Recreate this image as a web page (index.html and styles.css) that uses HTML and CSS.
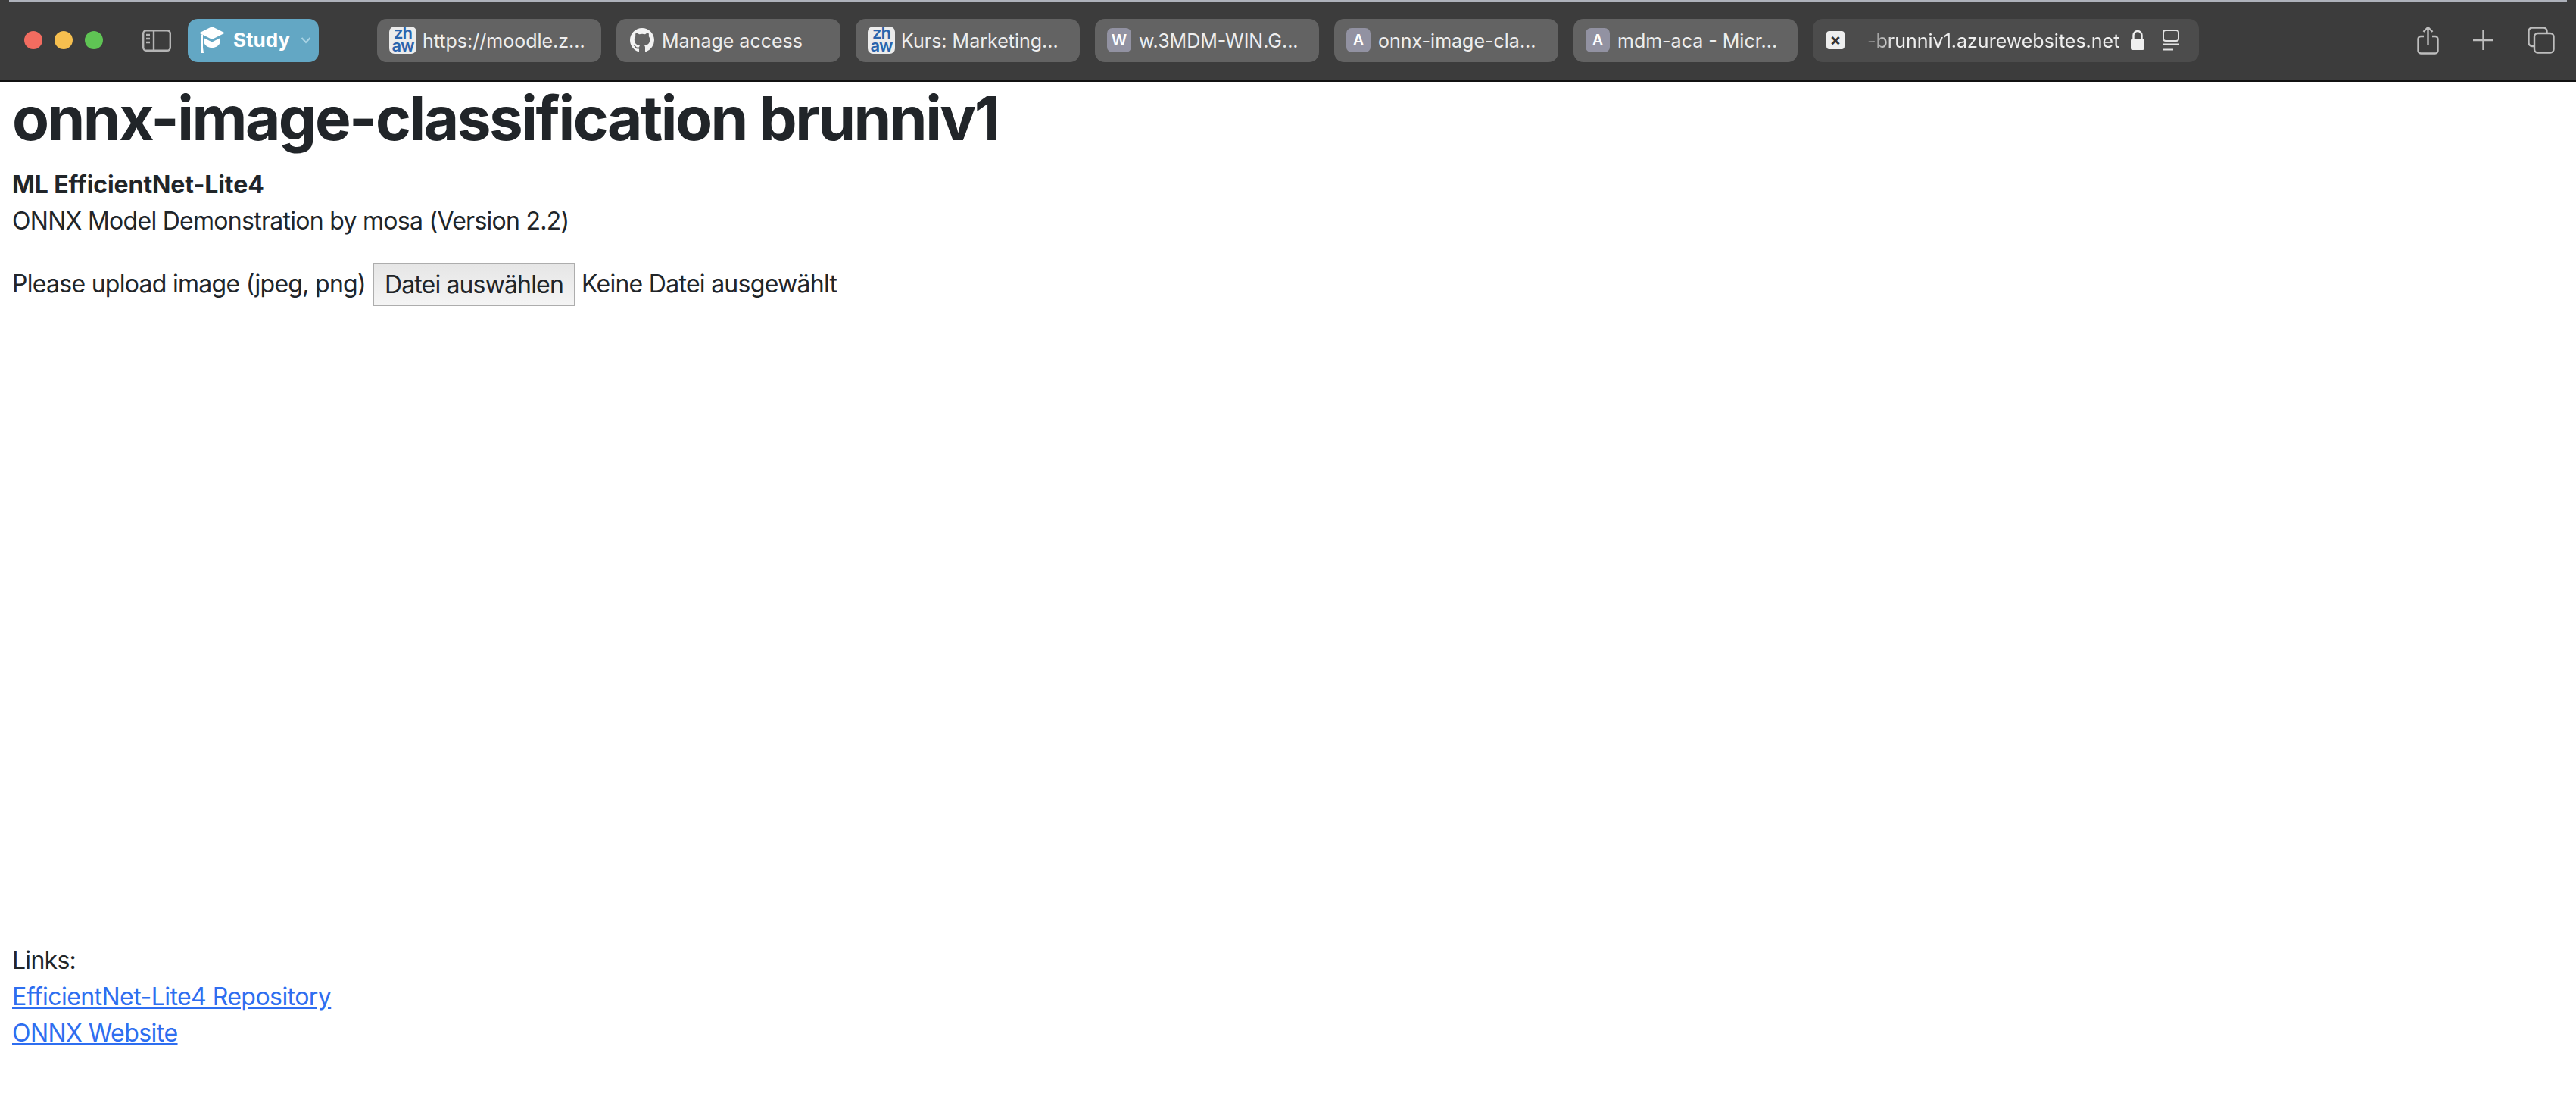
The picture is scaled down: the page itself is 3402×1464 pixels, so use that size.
FILE: index.html
```html
<!DOCTYPE html>
<html lang="en">
<head>
  <meta charset="UTF-8" />
  <title>onnx-image-classification brunniv1</title>
  <link rel="stylesheet" href="styles.css">
</head>
<body>

  <header class="toolbar">
    <div class="lights">
      <span class="light red"></span>
      <span class="light yellow"></span>
      <span class="light green"></span>
    </div>

    <svg class="sidebar-icon" viewBox="0 0 38 29" fill="none" stroke="#b4b4b4" stroke-width="2.4">
      <rect x="1.2" y="1.2" width="35.6" height="26.6" rx="4"/>
      <path d="M15 1.2v26.6"/>
      <path d="M5 7h5M5 12h5M5 17h5"/>
    </svg>

    <div class="group">
      <svg class="cap" viewBox="0 0 36 38" fill="#fff">
        <path d="M18 1 35 9.500 18 18 1 9.500z"/>
        <path d="M8 16.500v7c2 4 6 5.500 10 5.500s8-1.500 10-5.500v-7L18 21.500z"/>
        <path d="M4 11.500h2v17.500l1 7H3l1-7z"/>
      </svg>
      <span>Study</span>
      <svg class="chevron" viewBox="0 0 14 10" fill="none" stroke="#a9d3e4" stroke-width="2">
        <path d="M1.500 2 7 8l5.500-6"/>
      </svg>
    </div>

    <nav class="tabs">
      <div class="tab">
        <span class="zhaw">zh<br>aw</span>
        <span class="tab-title">https://moodle.z...</span>
      </div>
      <div class="tab tab-github">
        <svg class="github" viewBox="0 0 16 16" fill="#f2f2f2">
          <path d="M8 0C3.580 0 0 3.580 0 8c0 3.540 2.290 6.530 5.470 7.590.4.070.55-.17.55-.38 0-.19-.01-.82-.01-1.490-2.010.37-2.530-.49-2.690-.94-.09-.23-.48-.94-.82-1.130-.28-.15-.68-.52-.01-.53.63-.01 1.080.58 1.230.82.72 1.210 1.870.87 2.330.66.070-.52.28-.87.51-1.070-1.780-.2-3.640-.89-3.640-3.950 0-.87.31-1.590.82-2.150-.08-.2-.36-1.020.08-2.120 0 0 .67-.21 2.200.82.64-.18 1.320-.27 2-.27.68 0 1.360.09 2 .27 1.530-1.040 2.200-.82 2.200-.82.44 1.100.16 1.920.08 2.120.51.56.82 1.270.82 2.150 0 3.070-1.870 3.750-3.650 3.950.29.25.54.73.54 1.480 0 1.070-.01 1.930-.01 2.200 0 .21.15.46.55.38A8.013 8.013 0 0 0 16 8c0-4.420-3.580-8-8-8z"/>
        </svg>
        <span class="tab-title">Manage access</span>
      </div>
      <div class="tab">
        <span class="zhaw">zh<br>aw</span>
        <span class="tab-title">Kurs: Marketing...</span>
      </div>
      <div class="tab">
        <span class="letter">W</span>
        <span class="tab-title">w.3MDM-WIN.G...</span>
      </div>
      <div class="tab">
        <span class="letter">A</span>
        <span class="tab-title">onnx-image-cla...</span>
      </div>
      <div class="tab">
        <span class="letter">A</span>
        <span class="tab-title">mdm-aca - Micr...</span>
      </div>
      <div class="tab tab-active">
        <span class="close">&times;</span>
        <span class="tab-title url">-brunniv1.azurewebsites.net</span>
        <svg class="lock" viewBox="0 0 20 28" fill="none">
          <path d="M4.500 13V7.500a5.500 5.500 0 0 1 11 0V13" stroke="#efefef" stroke-width="2.400"/>
          <rect x="1" y="12" width="18" height="15" rx="2.500" fill="#efefef"/>
        </svg>
        <svg class="reader" viewBox="0 0 24 28" fill="none" stroke="#e2e2e2" stroke-width="2">
          <rect x="2" y="1" width="20" height="14" rx="3"/>
          <path d="M1 19.500h22M1 26.500h14"/>
        </svg>
      </div>
    </nav>

    <div class="actions">
      <svg class="share" viewBox="0 0 29 38" fill="none" stroke="#bdbdbd" stroke-width="2.400">
        <path d="M9 14H5a3.500 3.500 0 0 0-3.500 3.500V33A3.500 3.500 0 0 0 5 36.500h19a3.500 3.500 0 0 0 3.500-3.500V17.500A3.500 3.500 0 0 0 24 14h-4"/>
        <path d="M14.500 25V2M8.500 8l6-6 6 6"/>
      </svg>
      <svg class="plus" viewBox="0 0 27 26" fill="none" stroke="#bdbdbd" stroke-width="2.400">
        <path d="M13.500 0v26M0 13h27"/>
      </svg>
      <svg class="windows" viewBox="0 0 36 36" fill="none" stroke="#bdbdbd" stroke-width="2.400">
        <path d="M8 26H6a4.500 4.500 0 0 1-4.500-4.500V6A4.500 4.500 0 0 1 6 1.500h15A4.500 4.500 0 0 1 25.500 6v3"/>
        <rect x="9" y="9" width="25.500" height="25.500" rx="4.500"/>
      </svg>
    </div>
  </header>

  <main>
    <h1>onnx-image-classification brunniv1</h1>
    <p class="subtitle">ML EfficientNet-Lite4</p>
    <p>ONNX Model Demonstration by mosa (Version 2.2)</p>

    <form class="upload">
      <label for="imageFile">Please upload image (jpeg, png)</label>
      <span class="file-button">Datei auswählen</span>
      <span>Keine Datei ausgewählt</span>
    </form>

    <div class="links">
      <p>Links:</p>
      <p><a href="#">EfficientNet-Lite4 Repository</a></p>
      <p><a href="#">ONNX Website</a></p>
    </div>
  </main>

</body>
</html>
```

FILE: styles.css
```css
body {
  margin: 0;
  background-color: white;
  color: #212529;
  font-family: Inter, sans-serif;
  font-size: 32px;
  line-height: 48px;
  letter-spacing: -0.72px;
}

.toolbar {
  position: relative;
  display: flex;
  align-items: center;
  height: 108px;
  box-sizing: border-box;
  background-color: #3c3c3c;
  border-bottom: 2px solid #111;
  padding-left: 32px;
  color: #eee;
  font-size: 25px;
  line-height: 32px;
  letter-spacing: 0;
}

/* thin light edge above the window, stops short of the round corners */
.toolbar::before {
  content: "";
  position: absolute;
  top: 0;
  left: 12px;
  right: 12px;
  height: 3px;
  background-color: #aeb2bb;
}

.lights {
  display: flex;
  gap: 16px;
}

.light {
  width: 24px;
  height: 24px;
  border-radius: 50%;
}

.red { background-color: #f26c60; }
.yellow { background-color: #f6bf4f; }
.green { background-color: #5fc454; }

.sidebar-icon {
  width: 38px;
  height: 29px;
  margin-left: 52px;
}

.group {
  display: flex;
  align-items: center;
  width: 173px;
  height: 57px;
  box-sizing: border-box;
  margin-left: 22px;
  padding-left: 14px;
  background-color: #63a7c4;
  border-radius: 13px;
  color: white;
  font-size: 26px;
  font-weight: 700;
}

.cap {
  width: 36px;
  height: 38px;
  margin-right: 10px;
}

.chevron {
  width: 14px;
  height: 10px;
  margin-left: 14px;
}

.tabs {
  display: flex;
  gap: 20px;
  margin-left: 77px;
}

.tab {
  display: flex;
  align-items: center;
  width: 296px;
  height: 57px;
  box-sizing: border-box;
  padding-left: 16px;
  background-color: #636363;
  border-radius: 13px;
}

.tab-title {
  padding-top: 2px;
  white-space: nowrap;
}

.zhaw {
  width: 36px;
  height: 36px;
  margin-right: 8px;
  background-color: #ececec;
  border-radius: 7px;
  color: #2a64ad;
  font-size: 22px;
  font-weight: 600;
  line-height: 17px;
  letter-spacing: -1px;
  text-align: center;
}

.github {
  width: 32px;
  height: 32px;
  margin-left: 2px;
  margin-right: 10px;
}

.letter {
  width: 32px;
  height: 32px;
  margin-right: 10px;
  background-color: #9292a2;
  border-radius: 7px;
  color: white;
  font-size: 20px;
  font-weight: 600;
  line-height: 32px;
  text-align: center;
}

.tab-active {
  width: 510px;
  padding-left: 18px;
  background-color: #4c4c4c;
}

.close {
  width: 24px;
  height: 24px;
  margin-right: 30px;
  background-color: #eee;
  border-radius: 4px;
  color: #333;
  font-size: 22px;
  font-weight: 700;
  line-height: 23px;
  text-align: center;
}

.url {
  -webkit-mask-image: linear-gradient(to right, rgba(0,0,0,0.25), black 36px);
  mask-image: linear-gradient(to right, rgba(0,0,0,0.25), black 36px);
}

.lock {
  width: 20px;
  height: 28px;
  margin-left: 14px;
}

.reader {
  width: 24px;
  height: 28px;
  margin-left: 22px;
}

.actions {
  display: flex;
  align-items: center;
  margin-left: 288px;
}

.share {
  width: 29px;
  height: 38px;
}

.plus {
  width: 27px;
  height: 26px;
  margin-left: 45px;
}

.windows {
  width: 36px;
  height: 36px;
  margin-left: 45px;
}

main {
  padding: 0 16px;
}

h1 {
  margin: 0 0 16px;
  font-size: 80px;
  font-weight: 700;
  line-height: 96px;
  letter-spacing: -2.5px;
}

p {
  margin: 0;
}

.subtitle {
  font-weight: 700;
  letter-spacing: -0.1px;
}

.upload {
  display: flex;
  align-items: center;
  height: 58px;
  margin-top: 30px;
}

.file-button {
  width: 268px;
  height: 57px;
  box-sizing: border-box;
  margin-left: 9px;
  margin-right: 8px;
  background: linear-gradient(#e6e6e6, #f4f4f4);
  border: 2px solid #adadad;
  line-height: 53px;
  letter-spacing: -0.85px;
  text-align: center;
}

.links {
  margin-top: 840px;
}

a {
  color: #2e6ef0;
  letter-spacing: -0.55px;
}
```
